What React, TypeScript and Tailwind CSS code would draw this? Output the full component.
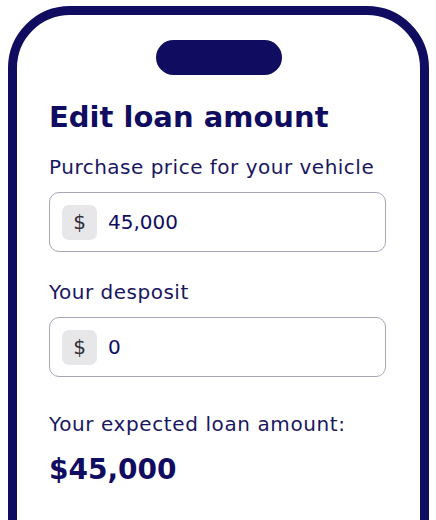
export default function App() {
  return (
    <div className="h-[520px] w-[436px] overflow-hidden bg-white pt-[6px] pl-[8px]" style={{ fontFamily: "'DejaVu Sans', sans-serif" }}>
      <div className="h-[600px] w-[421px] rounded-[62px] border-[9px] border-[#100c5f] bg-white pl-[32px]">
        <div className="flex justify-center pr-[32px] pt-[25px]">
          <div className="h-[35px] w-[126px] rounded-full bg-[#100c5f]" />
        </div>
        <h1 className="mt-[22px] text-[29px] font-bold leading-[40px] text-[#100c5f]">Edit loan amount</h1>
        <Field label="Purchase price for your vehicle" value="45,000" first />
        <div className="mt-[26px]">
          <Field label="Your desposit" value="0" />
        </div>
        <p className="mt-[33px] text-[20px] leading-[28px] tracking-[0.6px] text-[#1a165f]">Your expected loan amount:</p>
        <p className="mt-[14px] text-[28px] font-bold leading-[36px] text-[#100c5f]">$45,000</p>
      </div>
    </div>
  );
}

function Field({ label, value, first }: { label: string; value: string; first?: boolean }) {
  return (
    <div>
      <p className={`${first ? "mt-[16px]" : "mt-0"} text-[20px] leading-[28px] tracking-[0.5px] text-[#1a165f]`}>{label}</p>
      <div className="mt-[11px] flex h-[60px] w-[337px] items-center rounded-[10px] border border-[#a8a6b8] pl-[12px]">
        <span className="flex h-[35px] w-[35px] items-center justify-center rounded-[7px] bg-[#e7e7ea] text-[20px] text-[#2e2e38]">$</span>
        <span className="ml-[11px] text-[20px] text-[#100c5f]">{value}</span>
      </div>
    </div>
  );
}
